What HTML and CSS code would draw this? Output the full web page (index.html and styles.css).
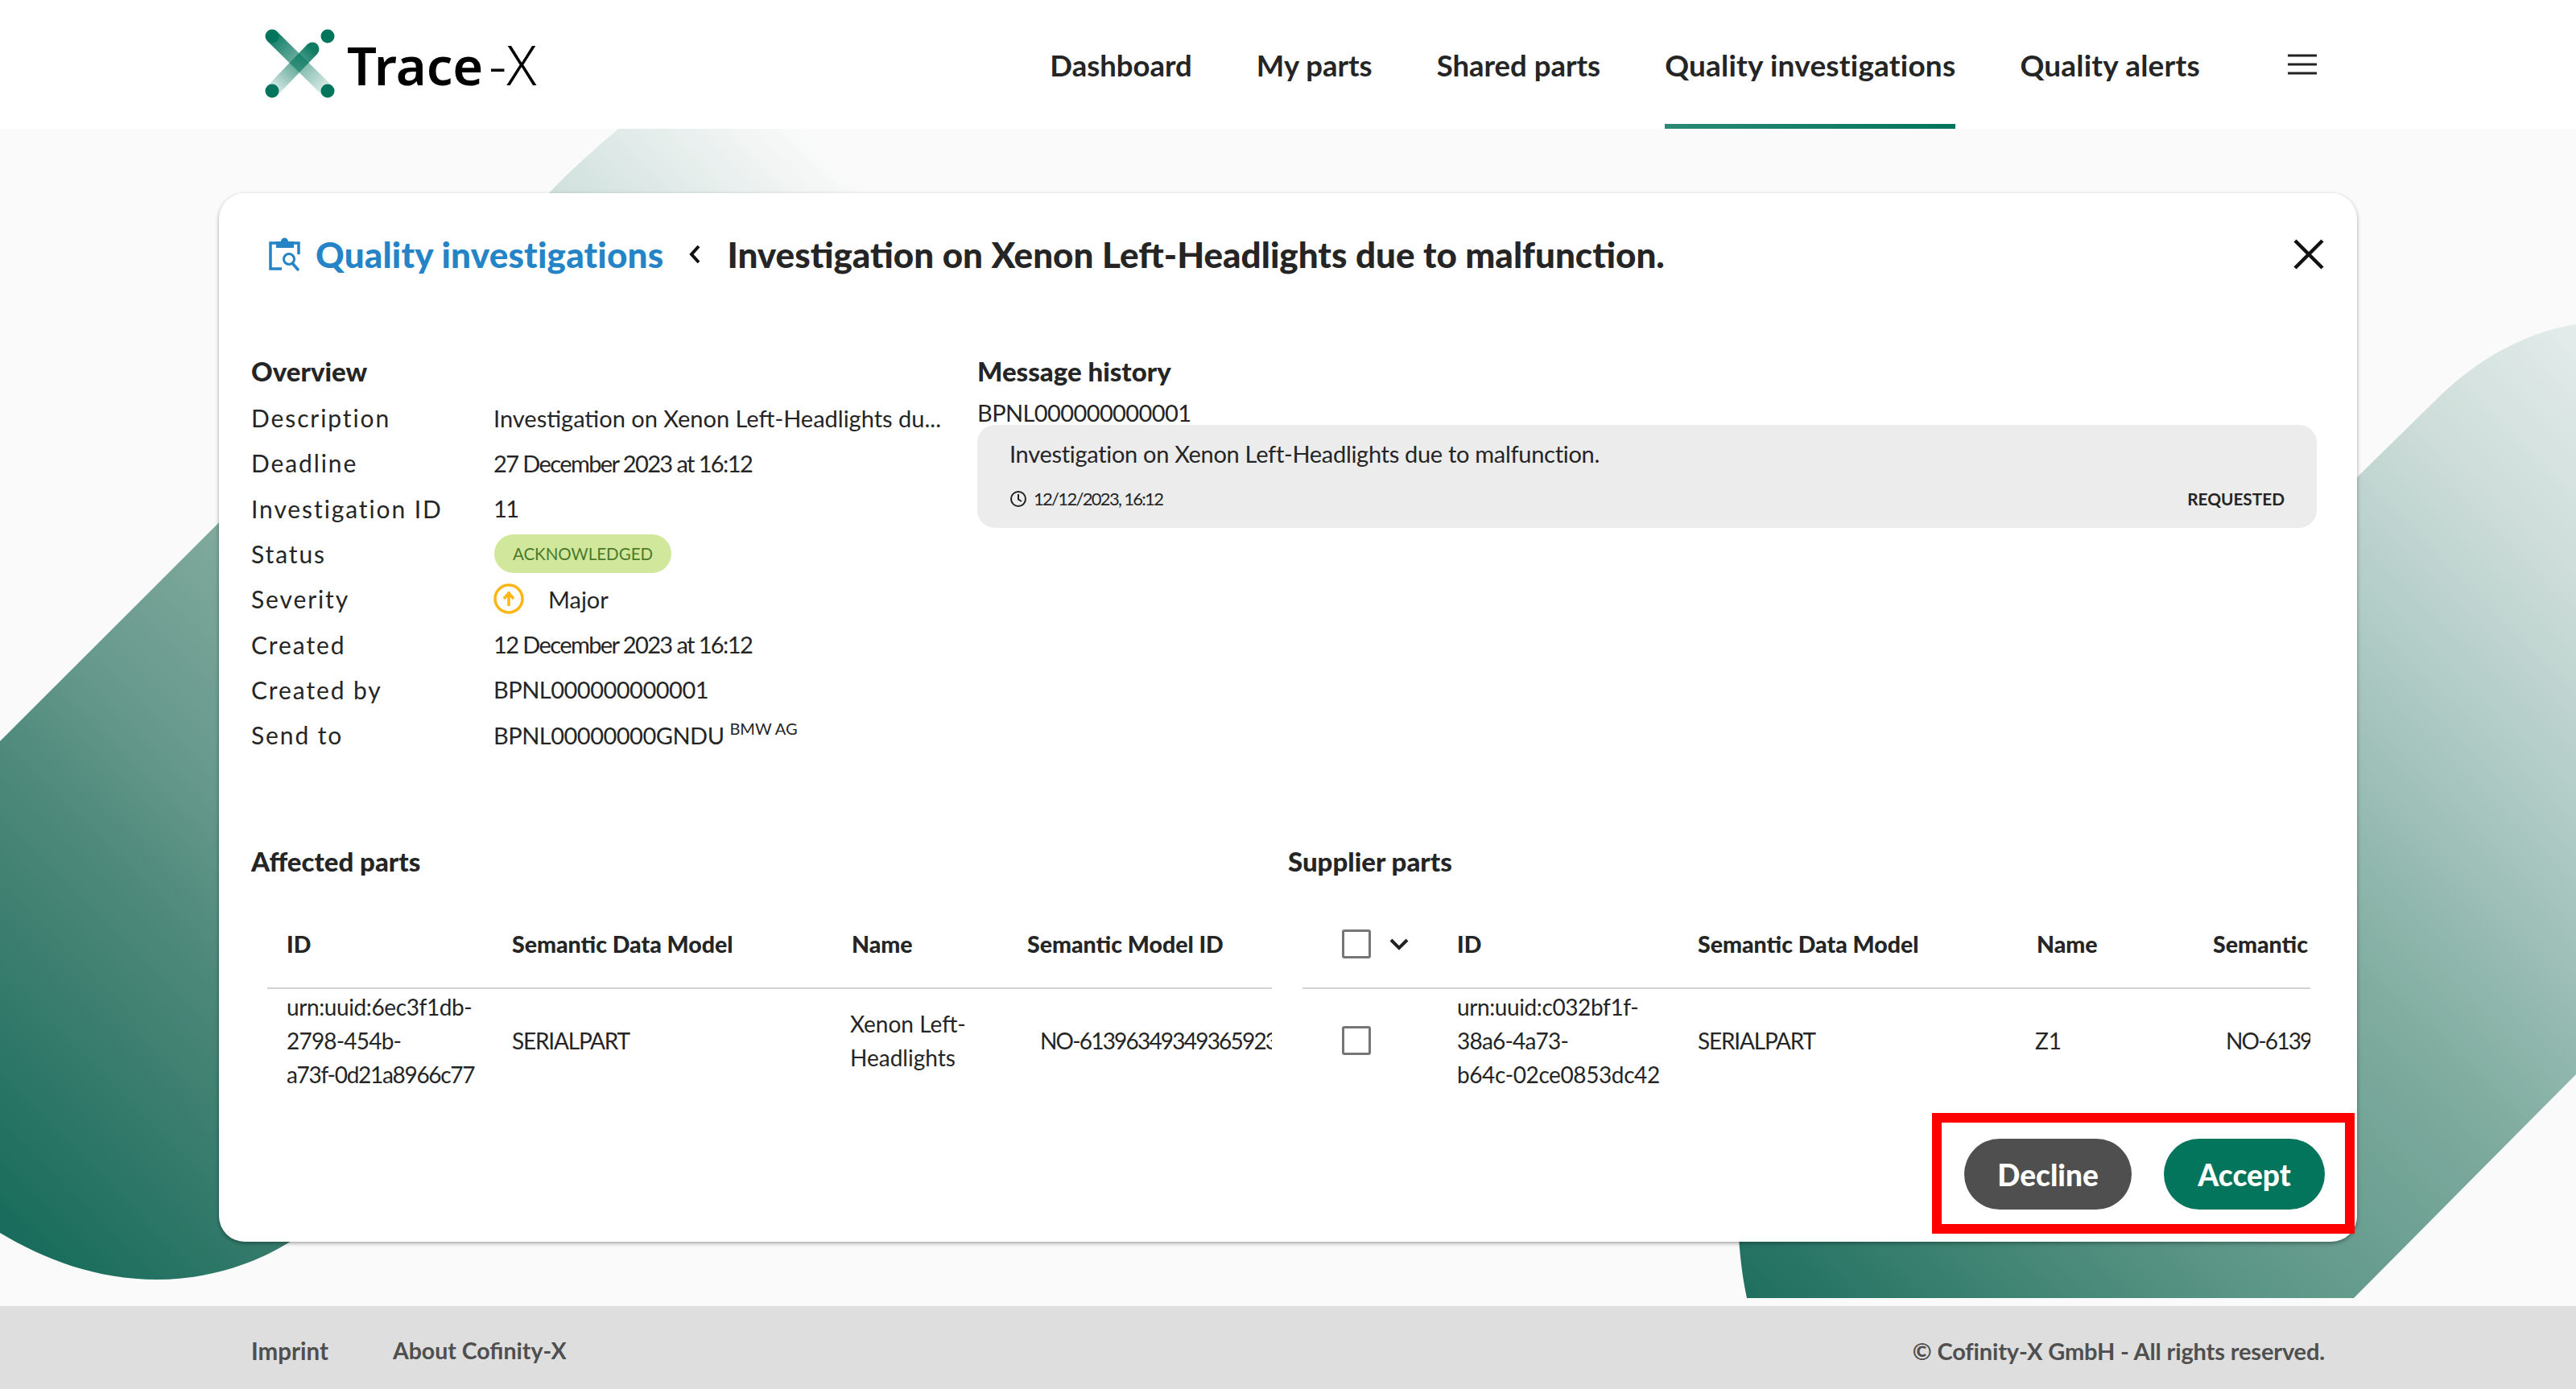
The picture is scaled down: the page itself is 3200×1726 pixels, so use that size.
FILE: index.html
```html
<!DOCTYPE html>
<html lang="en">
<head>
  <meta charset="UTF-8">
  <title>Trace-X</title>
  <link rel="stylesheet" href="styles.css">
</head>
<body>
  <header class="topbar">
    <a class="logo">
      <svg class="logo-mark" width="90" height="90" viewBox="0 0 90 90">
        <defs>
          <linearGradient id="armA" gradientUnits="userSpaceOnUse" x1="10" y1="10" x2="79" y2="78">
            <stop offset="0" stop-color="#03755c" stop-opacity="0.95"/>
            <stop offset="1" stop-color="#03755c" stop-opacity="0.12"/>
          </linearGradient>
          <linearGradient id="armB" gradientUnits="userSpaceOnUse" x1="10" y1="78" x2="60" y2="26">
            <stop offset="0" stop-color="#03755c" stop-opacity="0.12"/>
            <stop offset="1" stop-color="#03755c" stop-opacity="0.95"/>
          </linearGradient>
        </defs>
        <path d="M10 10L79 78" stroke="url(#armA)" stroke-width="17" fill="none"/>
        <path d="M10 78L60 26" stroke="url(#armB)" stroke-width="17" stroke-linecap="round" fill="none"/>
        <circle cx="10" cy="10" r="8.5" fill="#03755c"/>
        <circle cx="79" cy="10" r="8.5" fill="#03755c"/>
        <circle cx="10" cy="78" r="8.5" fill="#03755c"/>
        <circle cx="79" cy="78" r="8.5" fill="#03755c"/>
      </svg>
      <span class="logo-text"><b>Trace</b><i>-X</i></span>
    </a>
    <nav class="nav">
      <a>Dashboard</a>
      <a>My parts</a>
      <a>Shared parts</a>
      <a class="active wide">Quality investigations</a>
      <a class="wide">Quality alerts</a>
      <svg class="menu-icon" width="36" height="26" viewBox="0 0 36 26"><path d="M0 2H36M0 13H36M0 24H36" stroke="#222" stroke-width="3" fill="none"/></svg>
    </nav>
  </header>

  <main class="stage">
    <svg class="backdrop" width="3200" height="1726" viewBox="0 0 3200 1726">
      <defs>
        <linearGradient id="bgLeft" gradientUnits="userSpaceOnUse" x1="0" y1="1500" x2="1170" y2="330">
          <stop offset="0" stop-color="#1a6d5c"/>
          <stop offset="0.158" stop-color="#3d7f70"/>
          <stop offset="0.247" stop-color="#4f8a7c"/>
          <stop offset="0.334" stop-color="#66998c"/>
          <stop offset="0.479" stop-color="#80aa9d"/>
          <stop offset="0.83" stop-color="#cfe0dc"/>
          <stop offset="1" stop-color="#fafafa"/>
        </linearGradient>
        <linearGradient id="bgRight" gradientUnits="userSpaceOnUse" x1="2170" y1="1610" x2="3290" y2="490">
          <stop offset="0" stop-color="#1f6f5f"/>
          <stop offset="0.196" stop-color="#4a8a7a"/>
          <stop offset="0.286" stop-color="#5c9686"/>
          <stop offset="0.509" stop-color="#7fac9f"/>
          <stop offset="0.718" stop-color="#b0cbc6"/>
          <stop offset="0.866" stop-color="#cfdeda"/>
          <stop offset="1" stop-color="#e3ecea"/>
        </linearGradient>
      </defs>
      <path d="M0 921 L683 239 C715 205 745 180 780 150 L1400 150 L1400 500 L460 1440 C400 1545 290 1590 195 1590 C120 1590 55 1565 0 1532 Z" fill="url(#bgLeft)"/>
      <path d="M2158 1500 L2158 1100 L2928 593 L3033 490 C3080 445 3140 412 3200 403 L3200 1335 L2924 1613 L2170 1613 C2163 1580 2160 1550 2158 1500 Z" fill="url(#bgRight)"/>
    </svg>

    <section class="card">
      <div class="card-head">
        <svg class="clip-icon" width="40" height="42" viewBox="0 0 40 42">
          <path d="M10 7H2V39H16" fill="none" stroke="#2484c6" stroke-width="3.5"/>
          <path d="M30 7H37V21" fill="none" stroke="#2484c6" stroke-width="3.5"/>
          <path d="M9 5H15C15 -1 24 -1 24 5H31V13H9Z" fill="#2484c6"/>
          <circle cx="25" cy="27" r="6.5" fill="none" stroke="#2484c6" stroke-width="3"/>
          <path d="M29 32L37 41" stroke="#2484c6" stroke-width="3.5"/>
        </svg>
        <h1 class="crumb">Quality investigations</h1>
        <svg class="back-icon" width="18" height="26" viewBox="0 0 18 26"><path d="M14 3L5 13L14 23" fill="none" stroke="#111" stroke-width="4"/></svg>
        <h2 class="title">Investigation on Xenon Left-Headlights due to malfunction.</h2>
        <svg class="close-icon" width="40" height="40" viewBox="0 0 40 40"><path d="M3 3L37 37M37 3L3 37" stroke="#111" stroke-width="4.5"/></svg>
      </div>

      <div class="info-row">
        <div class="overview">
          <h3 class="section-title">Overview</h3>
          <dl class="facts">
            <dt>Description</dt><dd>Investigation on Xenon Left-Headlights du...</dd>
            <dt>Deadline</dt><dd class="date">27 December 2023 at 16:12</dd>
            <dt>Investigation ID</dt><dd class="date">11</dd>
            <dt>Status</dt><dd><span class="chip">ACKNOWLEDGED</span></dd>
            <dt>Severity</dt>
            <dd class="severity">
              <svg width="38" height="38" viewBox="0 0 38 38"><circle cx="19" cy="19" r="17" fill="none" stroke="#fbb615" stroke-width="3.5"/><path d="M19 28V14M13 19L19 12L25 19" fill="none" stroke="#fbb615" stroke-width="3.5"/></svg>
              <span>Major</span>
            </dd>
            <dt>Created</dt><dd class="date">12 December 2023 at 16:12</dd>
            <dt>Created by</dt><dd class="bpn">BPNL000000000001</dd>
            <dt>Send to</dt><dd class="bpn">BPNL00000000GNDU <sup class="org">BMW AG</sup></dd>
          </dl>
        </div>
        <div class="history">
          <h3 class="section-title">Message history</h3>
          <div class="sender">BPNL000000000001</div>
          <div class="message">
            <p>Investigation on Xenon Left-Headlights due to malfunction.</p>
            <div class="message-meta">
              <span class="stamp">
                <svg width="22" height="22" viewBox="0 0 22 22"><circle cx="11" cy="11" r="9" fill="none" stroke="#222" stroke-width="2"/><path d="M11 5V11.5L15 14" fill="none" stroke="#222" stroke-width="2"/></svg>
                <span class="stamp-text">12/12/2023, 16:12</span>
              </span>
              <b>REQUESTED</b>
            </div>
          </div>
        </div>
      </div>

      <div class="tables">
        <div class="parts parts-left">
          <h3 class="section-title">Affected parts</h3>
          <div class="table-clip">
            <table>
              <thead><tr><th class="c-id">ID</th><th class="c-model">Semantic Data Model</th><th class="c-name">Name</th><th class="c-sem">Semantic Model ID</th></tr></thead>
              <tbody><tr>
                <td><span class="loose">urn:uuid:6ec3f1db-</span><br>2798-454b-<br><span class="tight">a73f-0d21a8966c77</span></td>
                <td class="model-cell">SERIALPART</td>
                <td class="name-cell">Xenon Left-<br>Headlights</td>
                <td class="sem-cell">NO-613963493493659233</td>
              </tr></tbody>
            </table>
          </div>
        </div>
        <div class="parts parts-right">
          <h3 class="section-title">Supplier parts</h3>
          <div class="table-clip">
            <table>
              <thead><tr>
                <th class="c-check"><span class="check-wrap"><span class="checkbox"></span><svg width="26" height="16" viewBox="0 0 26 16"><path d="M3 3L13 13L23 3" fill="none" stroke="#222" stroke-width="4"/></svg></span></th>
                <th class="c-id2">ID</th><th class="c-model2">Semantic Data Model</th><th class="c-name2">Name</th><th class="c-sem2">Semantic Model ID</th>
              </tr></thead>
              <tbody><tr>
                <td class="check-cell"><span class="checkbox"></span></td>
                <td><span class="loose">urn:uuid:c032bf1f-</span><br>38a6-4a73-<br><span class="loose">b64c-02ce0853dc42</span></td>
                <td class="model-cell">SERIALPART</td>
                <td class="name-cell">Z1</td>
                <td class="sem-cell">NO-613963493493659233</td>
              </tr></tbody>
            </table>
          </div>
        </div>
      </div>

      <div class="actions">
        <button class="btn btn-grey">Decline</button>
        <button class="btn btn-green">Accept</button>
        <div class="highlight"></div>
      </div>
    </section>
  </main>

  <footer class="footer">
    <div class="footer-links"><a>Imprint</a><a class="about">About Cofinity-X</a></div>
    <div class="copyright">© Cofinity-X GmbH - All rights reserved.</div>
  </footer>
</body>
</html>
```

FILE: styles.css
```css
* {
  box-sizing: border-box;
}

html, body {
  margin: 0;
  height: 100%;
}

body {
  font-family: "Lato", "Noto Sans", sans-serif;
  color: #252525;
  background: #fafafa;
  width: 3200px;
  height: 1726px;
  display: flex;
  flex-direction: column;
  overflow: hidden;
}

/* header */
.topbar {
  height: 160px;
  background: #ffffff;
  display: flex;
  align-items: center;
  justify-content: space-between;
  padding: 0 322px 0 328px;
  position: relative;
  z-index: 2;
}

.logo {
  display: flex;
  align-items: center;
  gap: 13px;
  height: 160px;
}

.logo-mark {
  display: block;
}

.logo-text {
  font-family: "Noto Sans", sans-serif;
  font-size: 65px;
  color: #000;
  line-height: 1;
}

.logo-text b {
  font-weight: 600;
}

.logo-text i {
  font-style: normal;
  font-size: 68px;
  font-weight: 300;
  margin-left: 7px;
}

.nav {
  display: flex;
  align-items: center;
  gap: 80px;
  height: 160px;
}

.nav a {
  font-size: 36.5px;
  font-weight: 700;
  color: #252525;
  height: 160px;
  line-height: 162px;
}

.nav a.wide {
  font-size: 37px;
  letter-spacing: 0.2px;
}

.nav a.active {
  border-bottom: 6px solid;
  border-image: linear-gradient(to right, #2b8a75, #03755c) 1;
}

.menu-icon {
  margin-left: 29px;
}

/* page area */
.stage {
  flex: 1;
  position: relative;
  padding: 80px 272px;
}

.backdrop {
  position: absolute;
  left: 0;
  top: -160px;
}

.card {
  position: relative;
  width: 2656px;
  height: 1303px;
  background: #ffffff;
  border-radius: 32px;
  box-shadow: 0 2px 5px rgba(0, 0, 0, 0.35);
  padding: 0 40px;
  display: flex;
  flex-direction: column;
}

.card-head {
  display: flex;
  align-items: center;
  height: 152px;
  padding-left: 22px;
}

.clip-icon {
  margin-right: 18px;
}

.crumb {
  margin: 0 30px 0 0;
  font-size: 44px;
  font-weight: 900;
  letter-spacing: 0.2px;
  color: #2484c6;
}

.back-icon {
  margin-right: 31px;
}

.title {
  margin: 0;
  font-size: 44px;
  font-weight: 900;
  color: #252525;
  flex: 1;
}

.section-title {
  margin: 0;
  font-size: 33px;
  font-weight: 900;
  color: #252525;
  line-height: 40px;
}

.info-row {
  display: flex;
  margin-top: 49px;
  height: 609px;
}

.overview {
  width: 902px;
}

.facts {
  margin: 10px 0 0;
  display: grid;
  grid-template-columns: 301px 1fr;
  grid-auto-rows: 56.3px;
  align-items: center;
  font-size: 29px;
}

.facts dt {
  font-size: 30px;
  letter-spacing: 1.9px;
  color: #252525;
}

.facts dd {
  margin: 0;
  font-weight: 400;
  white-space: nowrap;
}

.facts .date {
  letter-spacing: -1.6px;
}

.facts .bpn {
  letter-spacing: -0.5px;
}

.chip {
  display: inline-flex;
  align-items: center;
  justify-content: center;
  width: 220px;
  height: 48px;
  margin-left: 1px;
  border-radius: 24px;
  background: #d1e79b;
  color: #4b7a2b;
  font-size: 20.5px;
  font-weight: 400;
}

.severity {
  display: flex;
  align-items: center;
  gap: 30px;
}

.org {
  font-size: 20px;
  letter-spacing: 0;
  vertical-align: 12px;
  line-height: 0;
}

.history {
  flex: 1;
  padding-right: 10px;
}

.sender {
  margin-top: 16px;
  font-size: 29px;
  letter-spacing: -0.6px;
  line-height: 31px;
}

.message {
  background: #ececec;
  border-radius: 22px;
  height: 128px;
  padding: 16px 40px 0;
}

.message p {
  margin: 0;
  font-size: 29px;
  letter-spacing: -0.3px;
  line-height: 40px;
}

.message-meta {
  margin-top: 22px;
  display: flex;
  justify-content: space-between;
  align-items: center;
  font-size: 20.8px;
}

.message-meta b {
  font-weight: 700;
}

.stamp {
  display: flex;
  align-items: center;
  gap: 8px;
}

.stamp-text {
  font-size: 22px;
  letter-spacing: -1.7px;
}

/* tables */
.tables {
  display: flex;
  gap: 20px;
}

.parts-left {
  width: 1268px;
}

.parts-right {
  width: 1270px;
}

.table-clip {
  margin-top: 32px;
  overflow: hidden;
}

.parts-left .table-clip {
  margin-left: 20px;
}

.parts-right .table-clip {
  margin-left: 18px;
}

table {
  border-collapse: collapse;
  table-layout: fixed;
  width: 100%;
  font-size: 28px;
}

th {
  height: 106px;
  text-align: left;
  font-size: 28.5px;
  font-weight: 900;
  padding: 0 0 4px 24px;
  white-space: nowrap;
  border-bottom: 2px solid #d3d3d3;
}

td {
  height: 130px;
  padding: 0 0 2px 24px;
  letter-spacing: -0.8px;
  line-height: 42px;
  white-space: nowrap;
}

.loose {
  letter-spacing: -0.4px;
}

.tight {
  letter-spacing: -1.3px;
}

.c-id { width: 280px; }
.c-model { width: 422px; }
.c-name { width: 218px; }
.c-sem { width: 328px; }

.c-check { width: 168px; }
.c-id2 { width: 299px; }
.c-model2 { width: 421px; }
.c-name2 { width: 219px; }
.c-sem2 { width: 145px; }

.parts-right th:first-child, .check-cell {
  padding-left: 49px;
}

.model-cell {
  letter-spacing: -1.2px;
}

.name-cell {
  padding-left: 22px;
  letter-spacing: 0;
}

.sem-cell {
  padding-left: 40px;
  letter-spacing: -1.8px;
  overflow: hidden;
}

.check-wrap {
  display: flex;
  align-items: center;
  gap: 22px;
}

.checkbox {
  display: block;
  width: 36px;
  height: 36px;
  border: 3.5px solid #767676;
  border-radius: 3px;
}

/* buttons */
.actions {
  position: absolute;
  right: 0;
  bottom: 0;
  width: 528px;
  height: 160px;
  display: flex;
  justify-content: flex-end;
  align-items: center;
  gap: 40px;
  padding: 0 40px 8px 0;
}

.btn {
  height: 88px;
  border: none;
  border-radius: 44px;
  color: #ffffff;
  font-family: inherit;
  font-size: 37px;
  font-weight: 900;
  padding: 0;
}

.btn-grey {
  width: 208px;
  background: #4f4f4f;
}

.btn-green {
  width: 200px;
  background: #03755c;
}

.highlight {
  position: absolute;
  left: 0;
  top: 0;
  width: 525px;
  height: 150px;
  border: 12px solid #ff0000;
}

/* footer */
.footer {
  height: 103px;
  background: #dedede;
  display: flex;
  justify-content: space-between;
  align-items: center;
  padding: 8px 312px 0;
  font-size: 29.5px;
  font-weight: 700;
  color: #4f4f4f;
  position: relative;
}

.footer-links {
  display: flex;
  gap: 80px;
}

.about {
  font-size: 28.5px;
}

.copyright {
  font-size: 29px;
  letter-spacing: -0.15px;
}
```
